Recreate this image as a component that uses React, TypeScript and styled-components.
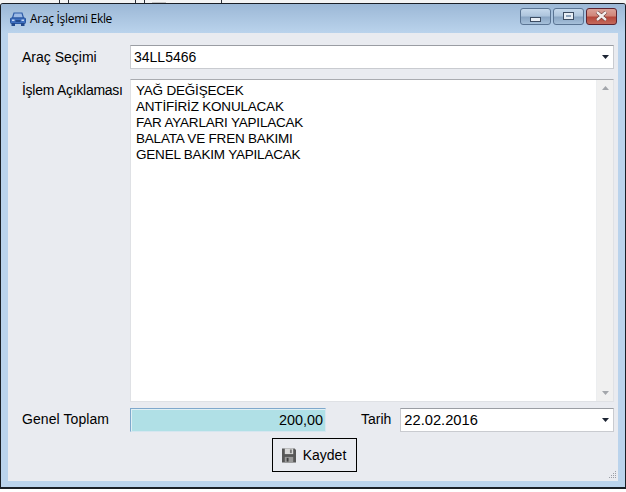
import styled, { createGlobalStyle } from "styled-components";

const GlobalStyle = createGlobalStyle`
  html, body {
    margin: 0;
    padding: 0;
    background: #fff;
  }
`;

const lines = [
  "YAĞ DEĞİŞECEK",
  "ANTİFİRİZ KONULACAK",
  "FAR AYARLARI YAPILACAK",
  "BALATA VE FREN BAKIMI",
  "GENEL BAKIM YAPILACAK",
];

function CarIcon() {
  return (
    <svg width="16" height="14" viewBox="0 0 16 14">
      <path d="M2.5 6 L4 1 H12 L13.5 6 Z" fill="#9dbbe6" stroke="#2f5da8" strokeWidth="1.2" />
      <rect x="0.5" y="6" width="15" height="5.5" rx="1" fill="#3f70c0" stroke="#28559e" />
      <rect x="1.5" y="11" width="3.5" height="3" fill="#234a8c" />
      <rect x="11" y="11" width="3.5" height="3" fill="#234a8c" />
      <rect x="2" y="7.5" width="2.5" height="1.5" fill="#c4d8f4" />
      <rect x="11.5" y="7.5" width="2.5" height="1.5" fill="#c4d8f4" />
      <rect x="5.5" y="8" width="5" height="2" fill="#234a8c" />
    </svg>
  );
}

function CloseIcon() {
  return (
    <svg width="13" height="10" viewBox="0 0 13 10">
      <path d="M2 1 L11 9 M11 1 L2 9" stroke="#5c2c2a" strokeWidth="3.6" />
      <path d="M2 1 L11 9 M11 1 L2 9" stroke="#f3eeec" strokeWidth="2.4" />
    </svg>
  );
}

function FloppyIcon() {
  return (
    <svg width="14" height="15" viewBox="0 0 15 15">
      <path d="M0 0 H13.5 L15 1.5 V15 H0 Z" fill="#575757" />
      <rect x="3" y="0" width="9" height="6" fill="#d8d8d8" />
      <rect x="8.5" y="1" width="2" height="4" fill="#777" />
      <rect x="3" y="9" width="9" height="6" fill="#9a9a9a" />
      <rect x="5" y="10" width="2" height="4" fill="#404040" />
    </svg>
  );
}

function Arrow({ up, color }: { up?: boolean; color: string }) {
  return (
    <svg width="7" height="4" viewBox="0 0 7 4">
      <path d={up ? "M3.5 0 L7 4 H0 Z" : "M0 0 H7 L3.5 4 Z"} fill={color} />
    </svg>
  );
}

function Grip() {
  const dots = [[6, 0], [4, 2], [6, 2], [2, 4], [4, 4], [6, 4], [0, 6], [2, 6], [4, 6], [6, 6]];
  return (
    <svg width="8" height="8" viewBox="0 0 8 8">
      {dots.map(([x, y]) => (
        <rect key={`${x}-${y}`} x={x} y={y} width="1" height="1" fill="#9a9ea6" />
      ))}
    </svg>
  );
}

export default function App() {
  return (
    <>
      <GlobalStyle />
      <Page>
        <TopStrip />
        <Window>
          <TitleBar>
            <CarIcon />
            <Title>Araç İşlemi Ekle</Title>
            <Controls>
              <CaptionButton>
                <MinGlyph />
              </CaptionButton>
              <CaptionButton>
                <MaxGlyph />
              </CaptionButton>
              <CaptionButton $close>
                <CloseIcon />
              </CaptionButton>
            </Controls>
          </TitleBar>
          <Client>
            <Row>
              <Label>Araç Seçimi</Label>
              <Combo>
                <ComboText>34LL5466</ComboText>
                <Arrow color="#1c2433" />
              </Combo>
            </Row>
            <MemoRow>
              <MemoLabel>İşlem Açıklaması</MemoLabel>
              <Memo>
                <MemoText>
                  {lines.map((l) => (
                    <div key={l}>{l}</div>
                  ))}
                </MemoText>
                <ScrollBar>
                  <Arrow up color="#a3a6ab" />
                  <Arrow color="#a3a6ab" />
                </ScrollBar>
              </Memo>
            </MemoRow>
            <Row>
              <TotalLabel>Genel Toplam</TotalLabel>
              <TotalField>200,00</TotalField>
              <DateLabel>Tarih</DateLabel>
              <Combo>
                <DateText>22.02.2016</DateText>
                <Arrow color="#1c2433" />
              </Combo>
            </Row>
            <ButtonRow>
              <SaveButton>
                <FloppyIcon />
                Kaydet
              </SaveButton>
            </ButtonRow>
            <GripSlot>
              <Grip />
            </GripSlot>
          </Client>
        </Window>
      </Page>
    </>
  );
}

const Page = styled.div`
  width: 626px;
  height: 492px;
  background: #fff;
  overflow: hidden;
`;

/* edge of whatever sits behind the window */
const TopStrip = styled.div`
  height: 3px;
  background:
    linear-gradient(#2c3038, #2c3038) 59px 0 / 1px 3px no-repeat,
    linear-gradient(#2c3038, #2c3038) 68px 0 / 1px 3px no-repeat,
    linear-gradient(#2c3038, #2c3038) 135px 0 / 1px 3px no-repeat,
    linear-gradient(#2c3038, #2c3038) 144px 0 / 1px 3px no-repeat,
    linear-gradient(#2c3038, #2c3038) 221px 0 / 1px 3px no-repeat,
    linear-gradient(#c4c4c4, #c4c4c4) 152px 2px / 14px 1px no-repeat,
    #f4f4f4;
`;

const Window = styled.div`
  height: 486px;
  box-sizing: border-box;
  border: 1px solid #1a1f26;
  border-bottom-width: 2px;
  border-radius: 3px 3px 0 0;
  background: #bad3ec;
  display: flex;
  flex-direction: column;
  padding: 0 7px 6px 7px;
`;

const TitleBar = styled.div`
  height: 29px;
  flex: none;
  margin: 0 -7px;
  padding: 0 8px 0 9px;
  display: flex;
  align-items: center;
  gap: 4px;
  background: linear-gradient(to bottom, #9cb8d6, #bad3ec);
  border-radius: 2px 2px 0 0;
`;

const Title = styled.span`
  font: 12px "Open Sans", sans-serif;
  color: #000;
  letter-spacing: -0.3px;
`;

const Controls = styled.div`
  margin-left: auto;
  margin-top: -5px;
  display: flex;
  gap: 2px;
`;

const CaptionButton = styled.div<{ $close?: boolean }>`
  width: 29px;
  height: 15px;
  box-sizing: content-box;
  border: 1px solid ${(p) => (p.$close ? "#5e2430" : "#5a7493")};
  border-radius: 3px;
  display: flex;
  align-items: center;
  justify-content: center;
  background: ${(p) =>
    p.$close
      ? "linear-gradient(to bottom, #dba197 0%, #d08679 45%, #b5473a 55%, #c46a5c 100%)"
      : "linear-gradient(to bottom, #c6d9ec 0%, #aec5dd 45%, #8aa6c4 55%, #a6c0da 100%)"};
`;

const MinGlyph = styled.div`
  width: 9px;
  height: 3px;
  background: #e8eef5;
  border: 1px solid #3c4c62;
  margin-top: 6px;
`;

const MaxGlyph = styled.div`
  width: 5px;
  height: 2px;
  background: #8ea4bd;
  border: 2px solid #e8eef5;
  outline: 1px solid #3c4c62;
`;

const Client = styled.div`
  flex: 1;
  position: relative;
  background: #e9ebf0;
  padding: 12px 4px 0 14px;
  display: flex;
  flex-direction: column;
`;

const Row = styled.div`
  display: flex;
  align-items: center;
  height: 24px;
  flex: none;
`;

const MemoRow = styled.div`
  display: flex;
  align-items: flex-start;
  height: 323px;
  flex: none;
  margin: 10px 0 6px;
`;

const Label = styled.div`
  width: 108px;
  flex: none;
  font: 14px "Liberation Sans", sans-serif;
  color: #000;
`;

const MemoLabel = styled(Label)`
  padding-top: 3px;
  letter-spacing: -0.27px;
`;

const TotalLabel = styled(Label)`
  margin-top: -2px;
  letter-spacing: 0.08px;
`;

const Combo = styled.div`
  flex: 1;
  height: 24px;
  box-sizing: border-box;
  background: #fff;
  border: 1px solid #c9cbd0;
  border-top-color: #9a9da3;
  display: flex;
  align-items: center;
  justify-content: space-between;
  padding: 0 4px 0 3px;
`;

const ComboText = styled.span`
  font: 14px "Liberation Sans", sans-serif;
  color: #000;
`;

const DateText = styled.span`
  font: 14.7px "Liberation Sans", sans-serif;
  color: #000;
`;

const Memo = styled.div`
  flex: 1;
  height: 323px;
  box-sizing: border-box;
  background: #fff;
  border: 1px solid #dfe1e5;
  border-top-color: #a9abb0;
  display: flex;
`;

const MemoText = styled.div`
  flex: 1;
  padding: 3px 0 0 5px;
  font: 13.5px/16px "Liberation Sans", sans-serif;
  letter-spacing: -0.2px;
  color: #000;
`;

const ScrollBar = styled.div`
  width: 16px;
  background: #f0f0f0;
  border-left: 1px solid #eceef0;
  display: flex;
  flex-direction: column;
  align-items: center;
  justify-content: space-between;
  padding: 6px 0;
`;

const TotalField = styled.div`
  width: 196px;
  height: 24px;
  flex: none;
  box-sizing: border-box;
  background: #b0e0e6;
  border: 1px solid #7fa8cc;
  border-right-color: #d6e6f0;
  border-bottom-color: #d6e6f0;
  box-shadow: inset 1px 1px 0 #dff0f5;
  text-align: right;
  padding-right: 2px;
  font: 14.4px/22px "Liberation Sans", sans-serif;
  color: #000;
`;

const DateLabel = styled.div`
  margin: -2px 9px 0 35px;
  font: 14px "Liberation Sans", sans-serif;
  color: #000;
`;

const ButtonRow = styled.div`
  display: flex;
  justify-content: center;
  margin-top: 6px;
  padding-right: 7px;
`;

const SaveButton = styled.button`
  width: 85px;
  height: 34px;
  box-sizing: border-box;
  background: #e9ebf0;
  border: 1px solid #000;
  display: flex;
  align-items: center;
  justify-content: center;
  gap: 7px;
  padding: 0 1px 0 0;
  font: 14px "Liberation Sans", sans-serif;
  color: #000;
`;

const GripSlot = styled.div`
  position: absolute;
  right: 1px;
  bottom: 2px;
  line-height: 0;
`;
